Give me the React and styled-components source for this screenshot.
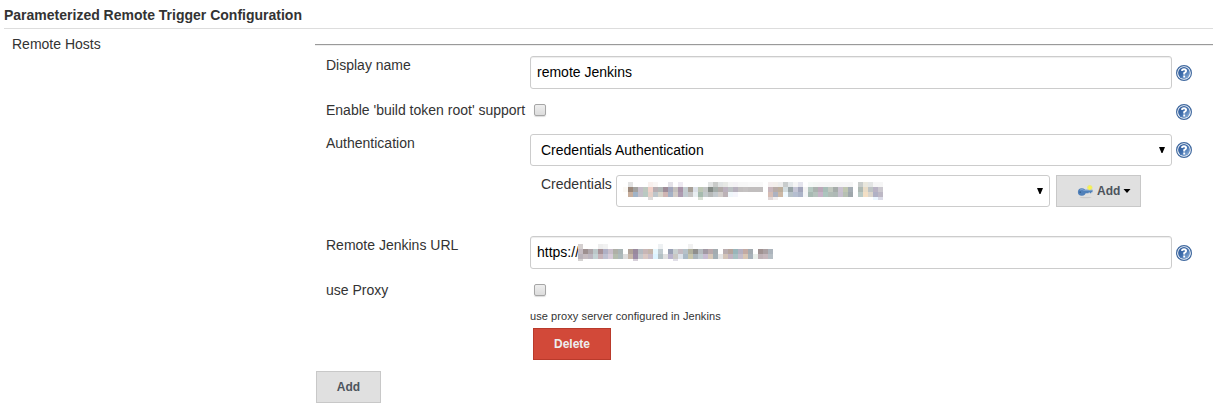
import React from "react";
import styled, { createGlobalStyle } from "styled-components";

const Global = createGlobalStyle`
  * { box-sizing: border-box; }
  body { margin: 0; background: #fff; color: #333; font: 14px/18px "Liberation Sans", Arial, sans-serif; overflow: hidden; }
  svg { display: block; flex: none; }
`;
const Page = styled.main`width: 1214px; height: 417px; padding: 6px 1px 0 4px;`;
const Title = styled.h1`
  margin: 0; height: 23px; font-size: 14px; line-height: 18px; font-weight: 700;
  border-bottom: 1px solid #ddd;
`;
const Columns = styled.div`display: flex;`;
const Side = styled.div`width: 311px; padding: 6px 0 0 8px;`;
const Main = styled.section`flex: 1; padding-top: 15px;`;
const Rule = styled.hr`margin: 0; height: 2px; border: 0; border-top: 1px solid #9a9a9a; border-bottom: 1px solid #eee;`;
const Row = styled.div`display: flex; height: ${p => p.$h}px;`;
const Label = styled.label`width: 215px; padding: ${p => p.$top || 0}px 0 0 11px; margin-top: ${p => p.$lift || 0}px; white-space: nowrap;`;
const Field = styled.div`width: 642px; padding-top: ${p => p.$top || 0}px;`;
const Control = styled.div`
  display: flex; align-items: center; justify-content: space-between;
  width: ${p => p.$w}px; height: ${p => p.$h || 33}px;
  padding: 0 5px ${p => (p.$h ? 0 : 1)}px ${p => p.$left || 6}px;
  border: 1px solid #ccc; border-radius: 3px; background: #fff; color: #000;
  box-shadow: ${p => (p.$h ? "none" : "inset 0 1px 1px rgba(0,0,0,.075)")};
`;
const Value = styled.span`display: flex; align-items: center;`;
const Nested = styled.div`display: flex; padding: 9px 0 0 11px;`;
const NestedLabel = styled.label`width: 75px;`;
const Check = styled.span`
  display: block; width: 12px; height: 12px; margin-left: 4px;
  border: 1px solid #a6a6a6; border-radius: 2px;
  background: linear-gradient(#eee, #dcdcdc); box-shadow: 0 1px 1px #ddd;
`;
const Hint = styled.div`height: 32px; padding-top: 14px; font-size: 11px; line-height: 12px; letter-spacing: 0.08px;`;
const Help = styled.div`width: 24px; padding: ${p => p.$top}px 0 0 4px;`;
const Button = styled.button`
  display: flex; align-items: center; justify-content: center;
  width: ${p => p.$w}px; height: 32px; padding: 0; margin: ${p => p.$margin || 0};
  border: 1px solid ${p => (p.$danger ? "#b93a2b" : "#c8c8c8")};
  background: ${p => (p.$danger ? "#d24939" : "#e0e0e0")};
  color: ${p => (p.$danger ? "#eee" : "#4d545d")};
  font: 700 12px/18px "Liberation Sans", Arial, sans-serif;
`;
const IconButton = styled(Button)`justify-content: flex-start; padding-left: 20px; gap: 3px;`;

const HelpIcon = () => (
  <svg width="16" height="16" viewBox="0 0 16 16">
    <defs>
      <linearGradient id="helpBlue" x1="0" y1="0" x2="1" y2="1">
        <stop offset="0" stopColor="#2c5695" /><stop offset=".5" stopColor="#4170ae" /><stop offset="1" stopColor="#9dbce0" />
      </linearGradient>
    </defs>
    <circle cx="8" cy="8" r="7.4" fill="#fff" stroke="#40699f" strokeWidth="1.2" />
    <circle cx="8" cy="8" r="5.9" fill="url(#helpBlue)" />
    <path d="M5.9 5.9Q6 4.2 8 4.2T10.1 5.9Q10.1 7 8.2 8.1V9.4M8.2 10.6V12.4" fill="none" stroke="#fff" strokeWidth="1.9" />
  </svg>
);
const SelectArrow = () => <svg width="8" height="8" viewBox="0 0 8 8"><path d="M1 1H7L4.5 7H3.5Z" fill="#000" /></svg>;
const MenuArrow = () => <svg width="8" height="4" viewBox="0 0 8 4"><path d="M.5 0H7.5L4 4Z" fill="#000" /></svg>;
const KeyIcon = () => (
  <svg width="17" height="16" viewBox="0 0 17 16">
    <ellipse cx="8.5" cy="14.6" rx="6" ry=".7" fill="#cbcbcb" />
    <ellipse cx="4.8" cy="9" rx="3.9" ry="3.8" fill="#5181ba" />
    <path d="M7.5 6.8H15.5V9.2H14.2V10.2H12.9V9.4H11.6V10.3H8Z" fill="#4f80b9" />
    <path d="M3 7Q5 5.8 7 7.3H15" stroke="#86a9d2" fill="none" strokeWidth=".9" />
    <circle cx="3.2" cy="9.2" r=".9" fill="#386494" />
    <circle cx="12.8" cy="4.6" r="2.6" fill="#eee95a" opacity=".75" />
    <path d="M12.8 2.2L13.5 3.9L15.2 4.6L13.5 5.3L12.8 7L12.1 5.3L10.4 4.6L12.1 3.9Z" fill="#fff93b" />
  </svg>
);

// Each row lists the block colours from left to right; "-" leaves a block empty.
const credentialBlocks = [
  "- e2e2e2 - - - f8f0ed f9f6f4 - - e4e2e8 - ede9f1 - - - - - e2e4e4 c9cbc9 e1e4e4 e7e9e5 f4f4f4 f4f2f5 f7f7f7 f7f7f7 f9f9f9 f9f9f9 f9f9f9 - f4eeee f3efeb ededed c8cccc e4e8ea f5f5f5 e4e4ed - f5f9f7 f4f7f5 f5f5f5 f5f5f5 f5f5f5 f5f5f5 f5f5f5 f6f5f7 f5f5f5 - c9cdcb e9e7dd e3e5e4 f6f6f6 f6f6f6",
  "fbf9f5 9b887b a2a19f c4bcc8 bec8bf f0d0c8 b7adb1 b0b6b5 9e8c98 a3a6bb c4c0bd a893a8 c4ccd0 a7a097 dce1e8 bdc7b5 c2c5c4 848b86 a4ada9 b1aaa7 bbb1bd bbc0c2 b7b1bd c2bfbf c5c2c2 c1bebe c1bebe c1bebe - c8b6bc b8aca8 bcae9c d3dde0 98a4a7 c4c5d5 a2a5bb f3f3f3 b6c8c1 abb3af bba8b9 a8beb8 c0c7be a6adaa c9c1cf c0c7b1 a5adb4 - aeb9b3 e9dcc7 bec4c4 b9b3c4 cbc8cf",
  "- c8af9d a0b3c7 c3bfc8 b9c9c2 e4cfc7 bdc5ca d6d3c9 cfb5b3 a4b1c5 d2cbc6 ad9cb1 c2ccd1 c5c4c4 e8eef0 a6bbae c3c9cb b6b9b8 c3c9cd d2cdca bcb2b6 eff6fa f5f5fb - - - - - - d6bdb5 adb2c1 ccb8a5 eff9ff b7c2c8 b5bed0 acb4c8 f3f5f6 a8bab3 b6c2bd c7b3c8 adc5be b1bcb6 afb9b6 c6bfce b7c0b3 9fa7ac - bacac5 f3dfc5 dbd6cc b0b1c5 bdb8c5",
  "- - - - - dedbda - - - - - - - - - d9e1d6 - - - - - - - - - - - - - e1d7d7 f3eeee - - - - - - - - - - - - - - - - - - - ecf7ff dbdbe7"
];
const urlBlocks = [
  "d5d0d0 - - - eeeeee f2f2f2 - - - - - - - - - - eef1f3 - - - - - f1f1f1 - - - - - - - - - - - - - - - -",
  "c5bcc2 9d9090 aea6aa bcc7c9 a79298 afb0c5 c8beca afafa7 a9b4b5 - b0a299 99899d b5bac0 c8b6b6 c4b5aa e5f6fd c1cbd0 - 9aa1b5 c9d0d0 c3bac1 b5c1c8 b0b09d 8f8f8d b5babf a299a4 b9a9ac a4acb0 - b9adaf b5a49c 99b5ba b5b0c0 c3aaa3 a3abb0 - a09291 aaa0a2 acb4bc",
  "b9b3ba c5bcc0 bcb6c0 c4d2d4 c6b3b9 bec1d1 d7cbd9 b4bcae adb9bb dddcdc c7b7aa 9c8ca6 c4c8cc dac8c3 c8bdc8 dcf3ff b3c0c4 e0e0e0 bab4cd c9c8c4 dce2e9 aabac6 c7c5ab abb5bc c0cbd0 c8bcd2 d6c8b9 a4b0b6 e4e4e4 d3c4b8 c1b3c1 a9c1c3 c4bcca d8c6b4 a7b1b9 e9eee9 bfb2b6 c6b8bd b6bec4",
  "d4d2d1 - - - - - - - - - - d6cfd9 - - - - - - - e0dee7 - - - - - - - - - - - - - - - - - - -"
];
const MosaicSvg = styled.svg`margin-left: ${p => p.$shift || 0}px;`;
const Mosaic = ({ rows, height, shift }) => {
  const width = rows[1].split(" ").length * 5;
  return (
    <MosaicSvg $shift={shift} width={width} height={height} viewBox={`0 0 ${width} ${height}`} shapeRendering="crispEdges">
      {rows.flatMap((row, y) => row.split(" ").map((c, x) => c !== "-" && (
        <rect key={`${x}-${y}`} x={x * 5} y={y * 5} width="5" height="5" fill={`#${c}`} />
      )))}
    </MosaicSvg>
  );
};

export default function App() {
  return (
    <>
      <Global />
      <Page>
        <Title>Parameterized Remote Trigger Configuration</Title>
        <Columns>
          <Side>Remote Hosts</Side>
          <Main>
            <Rule />
            <Row $h={48}>
              <Label $top={10}>Display name</Label>
              <Field $top={10}><Control $w={642}>remote Jenkins</Control></Field>
              <Help $top={19}><HelpIcon /></Help>
            </Row>
            <Row $h={40}>
              <Label $top={7}>Enable 'build token root' support</Label>
              <Field $top={10}><Check /></Field>
              <Help $top={10}><HelpIcon /></Help>
            </Row>
            <Row $h={102}>
              <Label>Authentication</Label>
              <Field>
                <Control $w={642} $h={32} $left={10}>Credentials Authentication<SelectArrow /></Control>
                <Nested>
                  <NestedLabel>Credentials</NestedLabel>
                  <Control $w={434} $h={32}><Mosaic rows={credentialBlocks} height={18} /><SelectArrow /></Control>
                  <IconButton $w={85} $margin="0 0 0 6px"><KeyIcon />Add<MenuArrow /></IconButton>
                </Nested>
              </Field>
              <Help $top={8}><HelpIcon /></Help>
            </Row>
            <Row $h={48}>
              <Label>Remote Jenkins URL</Label>
              <Field><Control $w={642}><Value>https://<Mosaic rows={urlBlocks} height={17} shift={-1} /></Value></Control></Field>
              <Help $top={9}><HelpIcon /></Help>
            </Row>
            <Row $h={87}>
              <Label $lift={-3}>use Proxy</Label>
              <Field>
                <Check />
                <Hint>use proxy server configured in Jenkins</Hint>
                <Button $w={78} $danger $margin="0 0 0 3px">Delete</Button>
              </Field>
            </Row>
            <Button $w={65} $margin="0 0 0 1px">Add</Button>
          </Main>
        </Columns>
      </Page>
    </>
  );
}
